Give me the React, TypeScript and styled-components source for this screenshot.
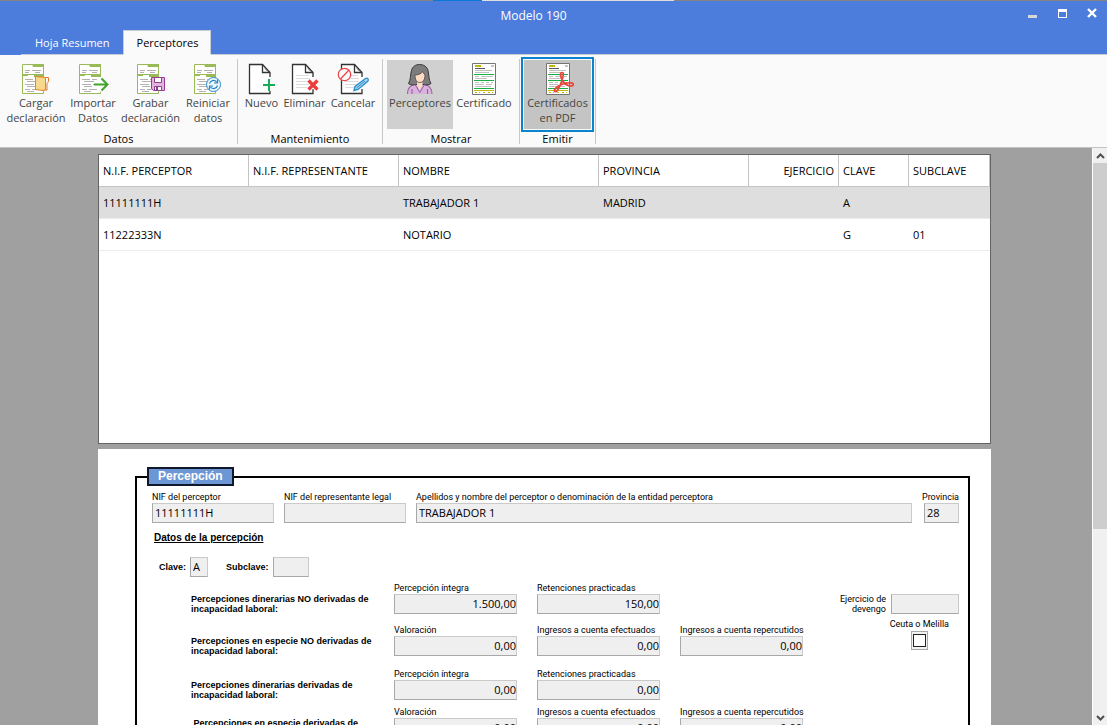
import React from "react";
import styled, { createGlobalStyle, css } from "styled-components";

const UI_FONT = `"Open Sans", "Noto Sans", sans-serif`;
const FORM_FONT = `Roboto, "Liberation Sans", sans-serif`;

const GlobalStyle = createGlobalStyle`
  *, *::before, *::after { box-sizing: border-box; }
  body { margin: 0; background: #a0a0a0; font: 11px/15px ${UI_FONT}; color: #000; }
  button, input { font: inherit; color: inherit; border-radius: 0; }
  button { background: none; border: 0; padding: 0; }
`;

/* ---------- window ---------- */

const Window = styled.div`
  display: flex;
  flex-direction: column;
  height: 100vh;
  overflow: hidden;
`;

const Header = styled.header`
  flex: none;
  background: #4c7cdc;
  color: #fff;
`;

const TopEdge = styled.div`
  height: 1px;
  background: linear-gradient(to right, #848484 39.1%, #0c78d8 39.1% 43.5%, #dedede 43.5% 60.9%, #848484 60.9%);
`;

const TitleBar = styled.div`
  display: flex;
  height: 29px;
  padding-left: 50px;
`;

const Title = styled.h1`
  flex: 1;
  margin: 0;
  font-size: 12px;
  line-height: 30px;
  font-weight: 400;
  text-align: center;
`;

const WindowButton = styled.button`
  width: 30px;
  height: 24px;
  display: grid;
  place-items: center;
`;

const Tabs = styled.nav`
  display: flex;
  height: 25px;
  margin-left: 21px;
  border-bottom: 1px solid #c8ccd4;
`;

const Tab = styled.button<{ $active?: boolean }>`
  height: 25px;
  padding: 0 12px 0 13px;
  color: #fff;
  border: 1px solid transparent;
  ${(p) =>
    p.$active &&
    css`
      color: #000;
      background: #fafafa;
      border-color: #c8ccd4;
      border-bottom-color: #fafafa;
    `}
`;

/* ---------- ribbon ---------- */

const Ribbon = styled.div`
  flex: none;
  display: flex;
  height: 93px;
  padding: 4px 0 3px;
  background: #fafafa;
  border-bottom: 1px solid #c4c4c4;
`;

const Group = styled.section`
  display: flex;
  flex-direction: column;
  padding: 1px 4px 0;
  border-right: 1px solid #c8c8c8;
`;

const GroupButtons = styled.div`
  display: flex;
  flex: 1;
`;

const GroupTitle = styled.h2`
  margin: 0;
  padding-top: 2px;
  font-size: 11px;
  line-height: 15px;
  font-weight: 400;
  text-align: center;
`;

const Tool = styled.button<{ $w: number; $state?: "on" | "focus" }>`
  display: flex;
  flex-direction: column;
  align-items: center;
  width: ${(p) => p.$w}px;
  height: 69px;
  padding-top: 3px;
  color: #444;
  white-space: pre;
  background: ${(p) => (p.$state === "on" ? "#d0d0d0" : p.$state === "focus" ? "#c4c4c4" : "none")};
  ${(p) =>
    p.$state === "focus" &&
    css`
      outline: 2px solid #0a84cc;
      outline-offset: 1px;
    `}
  svg {
    flex: none;
    overflow: visible;
  }
`;

/* ---------- work area ---------- */

const WorkArea = styled.div`
  flex: 1;
  min-height: 0;
  display: flex;
`;

const Content = styled.main`
  flex: 1;
  min-width: 0;
  overflow: hidden;
  padding: 6px 3px 0 0;
`;

const ScrollBar = styled.div`
  width: 15px;
  display: flex;
  flex-direction: column;
  background: #f0f0f0;
  border-left: 1px solid #fff;
`;

const ScrollButton = styled.button`
  height: 15px;
  display: grid;
  place-items: center;
`;

const ScrollTrack = styled.div`
  flex: 1;
`;

const ScrollThumb = styled.div`
  height: 67%;
  background: #cdcdcd;
`;

const GridPanel = styled.section`
  max-width: 893px;
  min-height: 290px;
  margin: 0 auto 5px;
  background: #fff;
  border: 1px solid #646464;
`;

const Grid = styled.table`
  width: 100%;
  table-layout: fixed;
  border-collapse: separate;
  border-spacing: 0;
`;

const HeadCell = styled.th<{ $w?: number; $right?: boolean }>`
  width: ${(p) => (p.$w ? `${p.$w}px` : "auto")};
  height: 32px;
  padding: 0 4px;
  font-weight: 400;
  white-space: nowrap;
  text-align: ${(p) => (p.$right ? "right" : "left")};
  border-right: 1px solid #c4c4c4;
  border-bottom: 1px solid #c4c4c4;
`;

const BodyRow = styled.tr<{ $selected?: boolean }>`
  background: ${(p) => (p.$selected ? "#dedede" : "#fff")};
`;

const Cell = styled.td`
  height: 32px;
  padding: 0 4px;
  border-bottom: 1px solid #ececec;
`;

/* ---------- form ---------- */

const FormPanel = styled.form`
  max-width: 893px;
  margin: 0 auto;
  padding: 18px 21px 30px 37px;
  background: #fff;
  font: 9px/10px ${FORM_FONT};
`;

const Box = styled.fieldset`
  margin: 0;
  min-width: 0;
  padding: 6px 9px 20px 15px;
  border: 2px solid #000;
`;

const Legend = styled.legend`
  margin-left: -5px;
  padding: 0 9px;
  border: 2px solid #10182c;
  background: #6c96d4;
  color: #fff;
  font: bold 12px/15px "Liberation Sans", sans-serif;
`;

const FieldRow = styled.div`
  display: flex;
  gap: 10px;
`;

const Field = styled.label<{ $w?: number; $end?: boolean }>`
  ${(p) => (p.$w ? `width: ${p.$w}px;` : "flex: 1;")}
  display: flex;
  flex-direction: column;
  gap: 1px;
  min-width: 0;
  white-space: nowrap;
  align-items: ${(p) => (p.$end ? "flex-end" : "stretch")};
`;

const TextInput = styled.input<{ $w?: number; $right?: boolean }>`
  width: ${(p) => (p.$w ? `${p.$w}px` : "100%")};
  height: 20px;
  padding: ${(p) => (p.$right ? "0 0 2px" : "0 2px 2px")};
  background: #efefef;
  border: 1px solid #cacaca;
  border-left-color: #a8a8a8;
  border-bottom-color: #a8a8a8;
  font: 11px/15px ${UI_FONT};
  text-align: ${(p) => (p.$right ? "right" : "left")};
`;

const SectionTitle = styled.h3`
  margin: 10px 2px 14px;
  font: bold 10px/10px "Liberation Sans", sans-serif;
  text-decoration: underline;
`;

const KeyRow = styled.div`
  display: flex;
  gap: 18px;
  padding-left: 7px;
  margin-bottom: 6px;
`;

const KeyLabel = styled.label`
  display: flex;
  align-items: center;
  gap: 4px;
  font: bold 9px/10px "Liberation Sans", sans-serif;
`;

const Columns = styled.div`
  display: flex;
  justify-content: space-between;
`;

const Rows = styled.div`
  padding-left: 39px;
`;

const AmountRow = styled.div<{ $gap: number }>`
  display: flex;
  gap: 20px;
  margin-bottom: ${(p) => p.$gap}px;
`;

const Description = styled.p`
  width: 183px;
  margin: 11px 0 0;
  font: bold 9px/10px "Liberation Sans", sans-serif;
  white-space: pre;
`;

const Side = styled.div`
  display: flex;
  flex-direction: column;
  align-items: flex-end;
  padding-top: 11px;
`;

const AccrualLabel = styled.label`
  display: flex;
  gap: 5px;
  text-align: right;
  white-space: pre;
  padding-bottom: 5px;
  align-items: center;
`;

const CheckLabel = styled.label`
  display: flex;
  flex-direction: column;
  align-items: center;
  gap: 2px;
  padding-right: 10px;
`;

const CheckBox = styled.input`
  appearance: none;
  width: 17px;
  height: 19px;
  margin: 0;
  display: grid;
  place-items: center;
  background: #f2f2f2;
  border: 1px solid #a8a8a8;
  &::before {
    content: "";
    width: 13px;
    height: 13px;
    background: #fff;
    border: 1px solid #222;
  }
`;

/* ---------- icons ---------- */

const FormSheet = () => (
  <g>
    <path d="M.5 1.5h21v29H.5z" fill="#fff" stroke="#9aba58" />
    <path d="M10 1h12v3H11zM0 11h22v1H0zM12 12h10v2H12zM0 12h6v1H0z" fill="#9aba58" />
    <path d="M3 7.500h5m2 0h9M3 9.500h4m6 0h5M3 16.500h8m2 0h5M5 18.500h10M3 21.500h9m2 0h4M5 23.500h8M3 26.500h5m2 0h8M5 28.500h7" stroke="#b4b0b4" fill="none" />
  </g>
);

const FolderIcon = () => (
  <svg width="28" height="32" viewBox="0 0 28 32">
    <FormSheet />
    <path d="M22 14.500h4.500v4l-1.500 2v6.500h-3z" fill="#fafafa" stroke="#e07828" />
    <path d="M13.500 13.500l10 1v12l-2.500 1-7.500-1z" fill="#f8d88c" stroke="#e08828" />
  </svg>
);

const ImportIcon = () => (
  <svg width="28" height="32" viewBox="0 0 28 32">
    <FormSheet />
    <path d="M22 14v15" stroke="#fafafa" strokeWidth="2" />
    <path d="M15 21.500h12.500M22.500 15.500l6 6-6 6" fill="none" stroke="#40a428" strokeWidth="2" />
  </svg>
);

const SaveIcon = () => (
  <svg width="28" height="32" viewBox="0 0 28 32">
    <FormSheet />
    <path d="M14.500 14.500h13v13h-11l-2-2z" fill="#e0b4dc" stroke="#943c94" />
    <path d="M17.500 14.500h7v5h-7zM17.500 23.500h7v4h-7z" fill="#fff" stroke="#943c94" />
    <path d="M19 24h2v3h-2z" fill="#943c94" />
  </svg>
);

const ReloadIcon = () => (
  <svg width="28" height="32" viewBox="0 0 28 32">
    <FormSheet />
    <circle cx="19.500" cy="21.500" r="7" fill="#eef8fe" stroke="#2c8cc8" />
    <path d="M15.500 20.500a4 4 0 0 1 7-1.500M23.500 16.500v3.500h-3.500M23.500 22.500a4 4 0 0 1-7 1.500M15.500 26.500v-3.500h3.500" fill="none" stroke="#2480c0" strokeWidth="1.200" />
  </svg>
);

const BlankPage = ({ lines }: { lines?: boolean }) => (
  <g>
    <path d="M1.500 1.500h13l7 7.500v21.500h-20z" fill="#fff" />
    <path d="M22 14V9.500L14.500 1.500h-13v29H22V26" fill="none" stroke="#333" strokeWidth="1.300" />
    <path d="M14.500 1.500V9.500H22" fill="none" stroke="#333" strokeWidth="1.300" />
    <path d="M16.500 5.500l3.500 3.500" stroke="#aaa" fill="none" />
    {lines && <path d="M5 12.500h13M5 15.500h14M5 18.500h14M5 21.500h13M5 24.500h12" stroke="#dcdcdc" fill="none" />}
  </g>
);

const NewIcon = () => (
  <svg width="28" height="32" viewBox="0 0 28 32">
    <BlankPage />
    <path d="M15 22h12M21 16v12" stroke="#fafafa" strokeWidth="5" />
    <path d="M15 22h12M21 16v12" stroke="#18ac58" strokeWidth="2" />
  </svg>
);

const DeleteIcon = () => (
  <svg width="28" height="32" viewBox="0 0 28 32">
    <BlankPage lines />
    <path d="M17.500 17.500l9 9M26.500 17.500l-9 9" stroke="#fafafa" strokeWidth="5" />
    <path d="M17.500 17.500l9 9M26.500 17.500l-9 9" stroke="#ec3c3c" strokeWidth="3.200" />
  </svg>
);

const CancelIcon = () => (
  <svg width="30" height="32" viewBox="-2 0 30 32">
    <BlankPage lines />
    <circle cx="4.500" cy="11.500" r="6.200" fill="#fafafa" stroke="#ec4848" strokeWidth="1.300" />
    <path d="M.5 16l8.500-9" stroke="#ec4848" strokeWidth="1.300" />
    <path d="M14 27.500l1-4 10.500-8c2-1 3.500.5 2.500 2.500l-10 8.500z" fill="#a8d8f4" stroke="#2c8cc8" strokeWidth="1.300" />
    <path d="M16.500 25l8.500-7" stroke="#2c8cc8" />
  </svg>
);

const PersonIcon = () => (
  <svg width="28" height="32" viewBox="0 0 28 32">
    <path d="M1 31c0-6 2-8.500 7.500-9.500h10C24 22.500 26 25 26 31z" fill="#d8b4dc" />
    <path d="M1.500 31c0-6 2-8.500 7-9.500M18.500 21.500C23.500 22.500 26 25 26 31M6 26v5M21.500 26v5" fill="none" stroke="#9c5ca4" strokeWidth="1.100" />
    <path d="M2.500 20.500c2.500-4 1.500-8 3-13C6.500 3.500 9.500 1.500 13.500 1.500s7.500 2 8.500 6c1.200 5 .5 9 3 13-2.500 2-6 1.500-7 1H9.500c-2.500.8-5 .5-7-1z" fill="#7c7c7c" stroke="#383838" />
    <path d="M11 18v4l2.800 5 2.700-5v-4z" fill="#fcdcc4" />
    <path d="M9 12c4 0 6.500-1.500 7.500-3.500 1 2 2 3 2.500 3.500 0 4.500-2 7.500-5.200 7.500S9 16.500 9 12z" fill="#fcdcc4" stroke="#4c4444" strokeWidth=".8" />
    <path d="M9 21.500l4.800 8 4.700-8" fill="none" stroke="#9c5ca4" />
  </svg>
);

const Certificate = () => (
  <g>
    <path d="M.5.500h23v31H.5z" fill="#fff" stroke="#747474" />
    <path d="M3 2h6v2H3z" fill="#c0b808" />
    <path d="M19 2h3v2h-3z" fill="#c4c4c4" />
    <path d="M3 5.500h10" stroke="#585858" />
    <path d="M3 7.500h17M3 9.500h14M3 13.500h4m2 0h12M3 15.500h12M3 19.500h4m2 0h3m2 0h3m2 0h2M3 21.500h9m2 0h6M3 23.500h16" stroke="#c0c0c0" fill="none" />
    <path d="M2 11.500h20M2 17.500h20M2 25.500h20" stroke="#14b044" />
    <path d="M2 27.500h20" stroke="#c0b808" />
    <path d="M3 29.500h2m2 0h1m3 0h2m3 0h2m2 0h1" stroke="#c0b808" />
  </g>
);

const CertificateIcon = () => (
  <svg width="24" height="32" viewBox="0 0 24 32">
    <Certificate />
  </svg>
);

const PdfIcon = () => (
  <svg width="24" height="32" viewBox="0 0 24 32">
    <Certificate />
    <path
      d="M16 9.500c-2.500 0-1.500 4.500.5 8s5.500 5.500 8.500 5.500 3-3 0-3.200c-4-.2-9 1-12.500 3.200s-5 4.500-3.500 5.500 3.500-2.500 5-6 3-8 3.200-10.500-.2-2.500-1.200-2.500z"
      fill="none"
      stroke="#ec4438"
      strokeWidth="1.700"
    />
  </svg>
);

const Chevron = ({ down }: { down?: boolean }) => (
  <svg width="9" height="6" viewBox="0 0 9 6">
    <path d={down ? "M1 1l3.500 3.500L8 1" : "M1 5l3.500-3.500L8 5"} fill="none" stroke="#505050" strokeWidth="2" />
  </svg>
);

/* ---------- data ---------- */

type ToolDef = { text: string; w: number; Icon: React.FC; state?: "on" | "focus" };

const groups: { title: string; tools: ToolDef[] }[] = [
  {
    title: "Datos",
    tools: [
      { text: "Cargar\ndeclaración", w: 64, Icon: FolderIcon },
      { text: "Importar\nDatos", w: 50, Icon: ImportIcon },
      { text: "Grabar\ndeclaración", w: 65, Icon: SaveIcon },
      { text: "Reiniciar\ndatos", w: 50, Icon: ReloadIcon },
    ],
  },
  {
    title: "Mantenimiento",
    tools: [
      { text: "Nuevo", w: 39, Icon: NewIcon },
      { text: "Eliminar", w: 47, Icon: DeleteIcon },
      { text: "Cancelar", w: 50, Icon: CancelIcon },
    ],
  },
  {
    title: "Mostrar",
    tools: [
      { text: "Perceptores", w: 66, Icon: PersonIcon, state: "on" },
      { text: "Certificado", w: 62, Icon: CertificateIcon },
    ],
  },
  { title: "Emitir", tools: [{ text: "Certificados\nen PDF", w: 67, Icon: PdfIcon, state: "focus" }] },
];

const columns = [
  { name: "N.I.F. PERCEPTOR", w: 150 },
  { name: "N.I.F. REPRESENTANTE", w: 150 },
  { name: "NOMBRE", w: 200 },
  { name: "PROVINCIA", w: 150 },
  { name: "EJERCICIO", w: 90, right: true },
  { name: "CLAVE", w: 70 },
  { name: "SUBCLAVE" },
];

const people = [
  ["11111111H", "", "TRABAJADOR 1", "MADRID", "", "A", ""],
  ["11222333N", "", "NOTARIO", "", "", "G", "01"],
];

const amounts: { text: string; gap: number; fields: [string, string][] }[] = [
  {
    text: "Percepciones dinerarias NO derivadas de\nincapacidad laboral:",
    gap: 11,
    fields: [["Percepción íntegra", "1.500,00"], ["Retenciones practicadas", "150,00"]],
  },
  {
    text: "Percepciones en especie NO derivadas de\nincapacidad laboral:",
    gap: 13,
    fields: [["Valoración", "0,00"], ["Ingresos a cuenta efectuados", "0,00"], ["Ingresos a cuenta repercutidos", "0,00"]],
  },
  {
    text: "Percepciones dinerarias derivadas de\nincapacidad laboral:",
    gap: 7,
    fields: [["Percepción íntegra", "0,00"], ["Retenciones practicadas", "0,00"]],
  },
  {
    text: " Percepciones en especie derivadas de\n incapacidad laboral:",
    gap: 11,
    fields: [["Valoración", "0,00"], ["Ingresos a cuenta efectuados", "0,00"], ["Ingresos a cuenta repercutidos", "0,00"]],
  },
];

export default function App() {
  return (
    <Window>
      <GlobalStyle />
      <Header>
        <TopEdge />
        <TitleBar>
          <Title>Modelo 190</Title>
          <WindowButton aria-label="Minimizar">
            <svg width="9" height="9"><path d="M0 6h9v3H0z" fill="#d8d8d8" /></svg>
          </WindowButton>
          <WindowButton aria-label="Maximizar">
            <svg width="9" height="9"><path d="M0 0h9v9H0zM1 3v5h7V3z" fill="#fff" fillRule="evenodd" /></svg>
          </WindowButton>
          <WindowButton aria-label="Cerrar">
            <svg width="10" height="10"><path d="M1 1l8 8M9 1L1 9" stroke="#fff" strokeWidth="2.400" /></svg>
          </WindowButton>
        </TitleBar>
        <Tabs>
          <Tab>Hoja Resumen</Tab>
          <Tab $active>Perceptores</Tab>
        </Tabs>
      </Header>

      <Ribbon>
        {groups.map((g) => (
          <Group key={g.title}>
            <GroupButtons>
              {g.tools.map(({ text, w, Icon, state }) => (
                <Tool key={text} $w={w} $state={state}>
                  <Icon />
                  {text}
                </Tool>
              ))}
            </GroupButtons>
            <GroupTitle>{g.title}</GroupTitle>
          </Group>
        ))}
      </Ribbon>

      <WorkArea>
        <Content>
          <GridPanel>
            <Grid>
              <thead>
                <tr>
                  {columns.map((c) => (
                    <HeadCell key={c.name} $w={c.w} $right={c.right}>{c.name}</HeadCell>
                  ))}
                </tr>
              </thead>
              <tbody>
                {people.map((row, i) => (
                  <BodyRow key={row[0]} $selected={i === 0}>
                    {row.map((value, j) => (
                      <Cell key={j}>{value}</Cell>
                    ))}
                  </BodyRow>
                ))}
              </tbody>
            </Grid>
          </GridPanel>

          <FormPanel>
            <Box>
              <Legend>Percepción</Legend>
              <FieldRow>
                <Field $w={122}>
                  NIF del perceptor
                  <TextInput defaultValue="11111111H" />
                </Field>
                <Field $w={122}>
                  NIF del representante legal
                  <TextInput />
                </Field>
                <Field>
                  Apellidos y nombre del perceptor o denominación de la entidad perceptora
                  <TextInput defaultValue="TRABAJADOR 1" />
                </Field>
                <Field $w={37} $end>
                  Provincia
                  <TextInput $w={35} defaultValue="28" />
                </Field>
              </FieldRow>

              <SectionTitle>Datos de la percepción</SectionTitle>
              <KeyRow>
                <KeyLabel>
                  Clave:
                  <TextInput $w={18} defaultValue="A" />
                </KeyLabel>
                <KeyLabel>
                  Subclave:
                  <TextInput $w={36} />
                </KeyLabel>
              </KeyRow>

              <Columns>
                <Rows>
                  {amounts.map((row) => (
                    <AmountRow key={row.text} $gap={row.gap}>
                      <Description>{row.text}</Description>
                      {row.fields.map(([label, value]) => (
                        <Field key={label} $w={123}>
                          {label}
                          <TextInput $right defaultValue={value} />
                        </Field>
                      ))}
                    </AmountRow>
                  ))}
                </Rows>
                <Side>
                  <AccrualLabel>
                    {"Ejercicio de\ndevengo"}
                    <TextInput $w={68} />
                  </AccrualLabel>
                  <CheckLabel>
                    Ceuta o Melilla
                    <CheckBox type="checkbox" />
                  </CheckLabel>
                </Side>
              </Columns>
            </Box>
          </FormPanel>
        </Content>
        <ScrollBar>
          <ScrollButton aria-label="Subir"><Chevron /></ScrollButton>
          <ScrollTrack><ScrollThumb /></ScrollTrack>
          <ScrollButton aria-label="Bajar"><Chevron down /></ScrollButton>
        </ScrollBar>
      </WorkArea>
    </Window>
  );
}
